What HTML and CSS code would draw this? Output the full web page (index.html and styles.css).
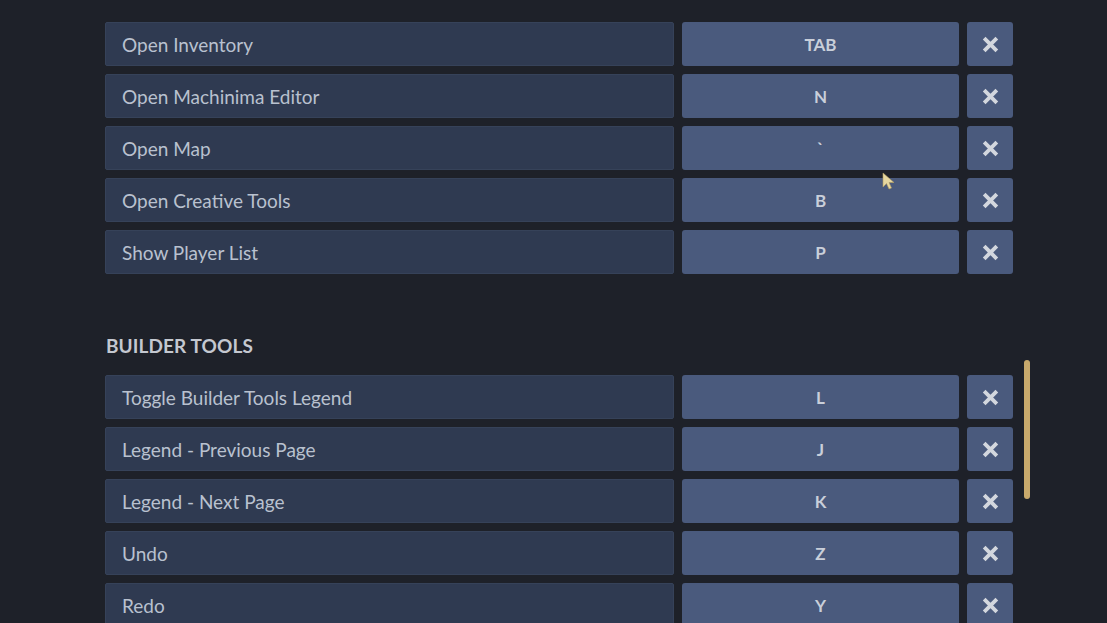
FILE: index.html
```html
<!DOCTYPE html>
<html>
<head>
<meta charset="utf-8">
<link rel="stylesheet" href="styles.css">
</head>
<body>
<div class="page">
  <div class="list">
    <h2 class="section-title first">GENERAL</h2>
    <div class="rows">
      <div class="row"><div class="label">Open Inventory</div><div class="key">TAB</div><button class="clear"><svg viewBox="0 0 18 18" width="19" height="19"><path d="M3 3L15 15M15 3L3 15"/></svg></button></div>
      <div class="row"><div class="label">Open Machinima Editor</div><div class="key">N</div><button class="clear"><svg viewBox="0 0 18 18" width="19" height="19"><path d="M3 3L15 15M15 3L3 15"/></svg></button></div>
      <div class="row"><div class="label">Open Map</div><div class="key">`</div><button class="clear"><svg viewBox="0 0 18 18" width="19" height="19"><path d="M3 3L15 15M15 3L3 15"/></svg></button></div>
      <div class="row"><div class="label">Open Creative Tools</div><div class="key">B</div><button class="clear"><svg viewBox="0 0 18 18" width="19" height="19"><path d="M3 3L15 15M15 3L3 15"/></svg></button></div>
      <div class="row"><div class="label">Show Player List</div><div class="key">P</div><button class="clear"><svg viewBox="0 0 18 18" width="19" height="19"><path d="M3 3L15 15M15 3L3 15"/></svg></button></div>
    </div>
    <h2 class="section-title">BUILDER TOOLS</h2>
    <div class="rows">
      <div class="row"><div class="label">Toggle Builder Tools Legend</div><div class="key">L</div><button class="clear"><svg viewBox="0 0 18 18" width="19" height="19"><path d="M3 3L15 15M15 3L3 15"/></svg></button></div>
      <div class="row"><div class="label">Legend - Previous Page</div><div class="key">J</div><button class="clear"><svg viewBox="0 0 18 18" width="19" height="19"><path d="M3 3L15 15M15 3L3 15"/></svg></button></div>
      <div class="row"><div class="label">Legend - Next Page</div><div class="key">K</div><button class="clear"><svg viewBox="0 0 18 18" width="19" height="19"><path d="M3 3L15 15M15 3L3 15"/></svg></button></div>
      <div class="row"><div class="label">Undo</div><div class="key">Z</div><button class="clear"><svg viewBox="0 0 18 18" width="19" height="19"><path d="M3 3L15 15M15 3L3 15"/></svg></button></div>
      <div class="row"><div class="label">Redo</div><div class="key">Y</div><button class="clear"><svg viewBox="0 0 18 18" width="19" height="19"><path d="M3 3L15 15M15 3L3 15"/></svg></button></div>
    </div>
  </div>
  <div class="scrollbar"><div class="thumb"></div></div>
</div>
<svg class="cursor" viewBox="0 0 16 20" width="16" height="20"><path d="M2 1L2 15L5.5 11.5L8 17L10.5 16L8 10.5L13 10.5Z"/></svg>
</body>
</html>
```

FILE: styles.css
```css
html, body {
  margin: 0;
  padding: 0;
  height: 100%;
  overflow: hidden;
  background: #1e2129;
}
body {
  font-family: Lato, "Noto Sans", sans-serif;
  color: #c3cad6;
  position: relative;
}
.page {
  display: flex;
  padding-left: 105px;
  gap: 11px;
}
.list {
  width: 908px;
  display: flex;
  flex-direction: column;
}
.section-title {
  margin: 60px 0 17px 1px;
  font-size: 19px;
  line-height: 24px;
  font-weight: 700;
  color: #c4c8d0;
  letter-spacing: 0.1px;
}
.section-title.first {
  margin-top: -20px;
  margin-bottom: 18px;
  color: #8a909c;
}
.rows {
  display: flex;
  flex-direction: column;
  gap: 8px;
}
.row {
  display: grid;
  grid-template-columns: 569px 277px 46px;
  gap: 8px;
  height: 44px;
}
.label {
  background: #2f3a51;
  border: 1px solid #364259;
  border-radius: 2px;
  box-sizing: border-box;
  display: flex;
  align-items: center;
  padding-left: 16px;
  font-size: 19px;
  color: #b9c1cf;
}
.key {
  background: #4a5a7d;
  border-radius: 3px;
  display: flex;
  align-items: center;
  justify-content: center;
  font-size: 17px;
  font-weight: 700;
  color: #c9cfda;
}
.clear {
  background: #4a5a7d;
  border: none;
  border-radius: 3px;
  padding: 0;
  display: flex;
  align-items: center;
  justify-content: center;
}
.clear svg path {
  stroke: #d3d7de;
  stroke-width: 3.6;
  stroke-linecap: butt;
  fill: none;
}
.scrollbar {
  padding-top: 360px;
}
.thumb {
  width: 6px;
  height: 139px;
  border-radius: 3px;
  background: #c8a96c;
}
.cursor {
  position: absolute;
  left: 881px;
  top: 172px;
}
.cursor path {
  fill: #e6d7a0;
  stroke: #b39c5e;
  stroke-width: 0.6;
}
```
